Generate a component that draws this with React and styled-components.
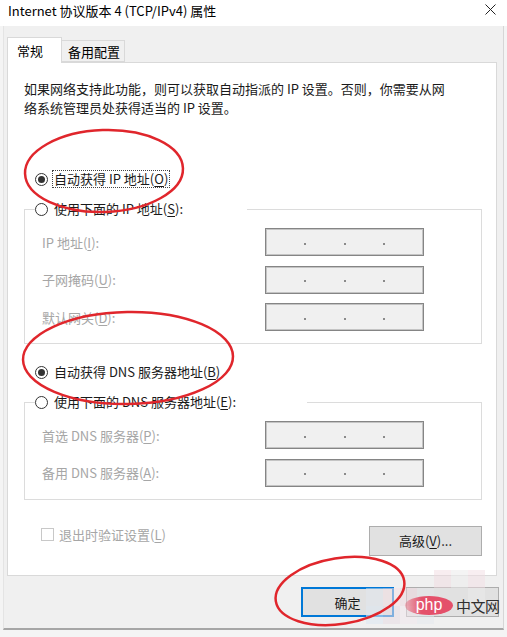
import React from 'react';
import styled, { createGlobalStyle } from 'styled-components';

const GlobalStyle = createGlobalStyle`
  html, body {
    margin: 0;
    padding: 0;
    background: #f4f4f4;
  }
  body {
    font-family: 'Noto Sans CJK SC', 'Noto Sans', sans-serif;
    font-size: 13px;
    color: #1a1a1a;
  }
`;

const Screen = styled.div`
  position: relative;
  width: 507px;
  height: 637px;
  overflow: hidden;
  background: #f4f4f4;
`;

const TitleBar = styled.div`
  height: 26px;
  background: #fff;
  display: flex;
  justify-content: space-between;
  align-items: flex-start;
  padding: 2px 11px 0 8px;
  box-sizing: border-box;
`;

const Title = styled.div`
  font-size: 13px;
  line-height: 18px;
  color: #000;
`;

const CloseBtn = styled.svg`
  margin-top: 2px;
`;

const Window = styled.div`
  margin-left: 3px;
  width: 501px;
  box-sizing: border-box;
  background: #f0f0f0;
  border-left: 1px solid #e4e4e4;
  border-right: 1px solid #d6d6d6;
  border-bottom: 2px solid #a6a6a6;
  padding: 11px 6px 0 3px;
`;

const Tabs = styled.div`
  display: flex;
  align-items: flex-end;
  position: relative;
  z-index: 1;
`;

const Tab = styled.div`
  box-sizing: border-box;
  height: ${(p) => (p.$active ? '26px' : '22px')};
  width: ${(p) => p.$w}px;
  padding-left: ${(p) => (p.$active ? '9px' : '6px')};
  display: flex;
  align-items: center;
  background: ${(p) => (p.$active ? '#fff' : '#f0f0f0')};
  border: 1px solid #d9d9d9;
  border-bottom: ${(p) => (p.$active ? 'none' : '1px solid #d9d9d9')};
  border-left: ${(p) => (p.$active ? '1px solid #d9d9d9' : 'none')};
  margin-bottom: ${(p) => (p.$active ? '-1px' : '0')};
  font-size: 13px;
  color: #000;
`;

const Panel = styled.div`
  box-sizing: border-box;
  height: 514px;
  background: #fff;
  border: 1px solid #d9d9d9;
  padding: 16px 14px 0 16px;
  display: flex;
  flex-direction: column;
`;

const Intro = styled.p`
  margin: 0;
  font-size: 13px;
  line-height: 19px;
  white-space: nowrap;
  color: #1a1a1a;
`;

const RadioRow = styled.div`
  display: flex;
  align-items: center;
  height: 18px;
  margin-left: 11px;
  margin-top: ${(p) => p.$mt || 0}px;
  gap: 5px;
  font-size: 13px;
  color: #1a1a1a;
`;

const RadioDot = styled.span`
  box-sizing: border-box;
  width: 13px;
  height: 13px;
  border-radius: 50%;
  border: 1px solid #333;
  background: #fff;
  display: flex;
  align-items: center;
  justify-content: center;
  flex-shrink: 0;

  &::after {
    content: '';
    width: 7px;
    height: 7px;
    border-radius: 50%;
    background: #333;
    display: ${(p) => (p.$checked ? 'block' : 'none')};
  }
`;

const RadioLabel = styled.span`
  white-space: nowrap;
  line-height: 16px;
  padding: 0 1px;
  outline: ${(p) => (p.$focus ? '1px dotted #444' : 'none')};
`;

const Key = styled.u`
  text-underline-offset: 2px;
`;

const Group = styled.fieldset`
  margin: 12px 0 0 0;
  padding: 0;
  border: 1px solid #dcdcdc;
  min-width: 0;
`;

const Legend = styled.legend`
  padding: 0;
  margin-left: 10px;
  width: ${(p) => p.$w}px;
  height: 18px;
  display: flex;
  align-items: center;
  gap: 5px;
  font-size: 13px;
  color: #1a1a1a;
`;

const Fields = styled.div`
  display: grid;
  grid-template-columns: 223px 159px;
  row-gap: 9.5px;
  align-items: center;
  padding: 10px 0 12px 17px;
`;

const FieldLabel = styled.span`
  font-size: 13px;
  color: #a6a6a6;
  white-space: nowrap;
`;

const IpBox = styled.div`
  box-sizing: border-box;
  height: 28px;
  background: #f0f0f0;
  border: 1px solid #858585;
  box-shadow: inset 0 0 0 1px #c4c4c4;
  display: grid;
  grid-template-columns: 1fr 0 1fr 0 1fr 0 1fr;
  align-items: center;
`;

const IpDot = styled.span`
  width: 2px;
  height: 2px;
  margin-left: -1px;
  margin-top: 3px;
  background: #8a8a8a;
`;

const BottomRow = styled.div`
  display: flex;
  justify-content: space-between;
  align-items: flex-start;
  margin-top: 26px;
  padding-left: 17px;
`;

const CheckRow = styled.div`
  display: flex;
  align-items: center;
  gap: 5px;
  height: 18px;
  font-size: 13px;
  color: #a6a6a6;
`;

const CheckBox = styled.span`
  box-sizing: border-box;
  width: 13px;
  height: 13px;
  border: 1px solid #c8c8c8;
  background: #fff;
`;

const Button = styled.div`
  box-sizing: border-box;
  width: ${(p) => p.$w}px;
  height: 30px;
  display: flex;
  align-items: center;
  justify-content: center;
  background: #e1e1e1;
  border: ${(p) => (p.$primary ? '2px solid #0078d7' : '1px solid #adadad')};
  font-size: 13px;
  color: #1a1a1a;
`;

const Footer = styled.div`
  height: 52px;
  box-sizing: border-box;
  display: flex;
  justify-content: flex-end;
  gap: 12px;
  padding: 11px 0 0 0;
  margin-right: -2px;
`;

const Marks = styled.svg`
  position: absolute;
  left: 0;
  top: 0;
  pointer-events: none;
`;

const Watermark = styled.div`
  position: absolute;
  left: 366px;
  top: 570px;
  width: 136px;
  height: 54px;
  display: grid;
  grid-template-columns: repeat(8, 1fr);
  grid-template-rows: repeat(3, 1fr);
  pointer-events: none;
`;

const Tile = styled.span`
  background: ${(p) => p.$c};
`;

const Brand = styled.div`
  position: absolute;
  left: 405px;
  top: 595px;
  display: flex;
  align-items: center;
  gap: 3px;
  pointer-events: none;
`;

const Php = styled.span`
  width: 48px;
  height: 19px;
  border-radius: 50%;
  background: linear-gradient(90deg, rgba(232, 90, 110, 0.35), #e4506a 35%);
  color: #fff;
  font-family: 'Liberation Sans', sans-serif;
  font-size: 16px;
  line-height: 17px;
  text-align: center;
`;

const Cn = styled.span`
  font-size: 15px;
  color: #2f2f2f;
  letter-spacing: -0.5px;
`;

const tiles = [
  'transparent', 'transparent', 'transparent', 'transparent', 'rgba(240,215,222,0.45)', 'rgba(236,236,236,0.6)', 'rgba(242,222,228,0.5)', 'transparent',
  'rgba(225,232,240,0.5)', 'rgba(245,225,230,0.55)', 'rgba(238,214,222,0.5)', 'rgba(230,230,236,0.45)', 'transparent', 'transparent', 'rgba(236,236,236,0.5)', 'transparent',
  'rgba(222,232,242,0.6)', 'rgba(232,220,228,0.55)', 'rgba(240,230,236,0.5)', 'rgba(228,232,238,0.5)', 'transparent', 'transparent', 'transparent', 'transparent',
];

function IpField() {
  return (
    <IpBox>
      <span />
      <IpDot />
      <span />
      <IpDot />
      <span />
      <IpDot />
      <span />
    </IpBox>
  );
}

export default function App() {
  return (
    <>
      <GlobalStyle />
      <Screen>
        <TitleBar>
          <Title>Internet 协议版本 4 (TCP/IPv4) 属性</Title>
          <CloseBtn width="11" height="11" viewBox="0 0 11 11">
            <path d="M0.5 0.5 L10.5 10.5 M10.5 0.5 L0.5 10.5" stroke="#222" strokeWidth="1" />
          </CloseBtn>
        </TitleBar>

        <Window>
          <Tabs>
            <Tab $active $w={55}>常规</Tab>
            <Tab $w={63}>备用配置</Tab>
          </Tabs>

          <Panel>
            <Intro>
              如果网络支持此功能，则可以获取自动指派的 IP 设置。否则，你需要从网
              <br />
              络系统管理员处获得适当的 IP 设置。
            </Intro>

            <RadioRow $mt={53}>
              <RadioDot $checked />
              <RadioLabel $focus>
                自动获得 IP 地址(<Key>O</Key>)
              </RadioLabel>
            </RadioRow>

            <Group>
              <Legend $w={212}>
                <RadioDot />
                <RadioLabel>
                  使用下面的 IP 地址(<Key>S</Key>):
                </RadioLabel>
              </Legend>
              <Fields>
                <FieldLabel>IP 地址(<Key>I</Key>):</FieldLabel>
                <IpField />
                <FieldLabel>子网掩码(<Key>U</Key>):</FieldLabel>
                <IpField />
                <FieldLabel>默认网关(<Key>D</Key>):</FieldLabel>
                <IpField />
              </Fields>
            </Group>

            <RadioRow $mt={19}>
              <RadioDot $checked />
              <RadioLabel>
                自动获得 DNS 服务器地址(<Key>B</Key>)
              </RadioLabel>
            </RadioRow>

            <Group>
              <Legend $w={272}>
                <RadioDot />
                <RadioLabel>
                  使用下面的 DNS 服务器地址(<Key>E</Key>):
                </RadioLabel>
              </Legend>
              <Fields>
                <FieldLabel>首选 DNS 服务器(<Key>P</Key>):</FieldLabel>
                <IpField />
                <FieldLabel>备用 DNS 服务器(<Key>A</Key>):</FieldLabel>
                <IpField />
              </Fields>
            </Group>

            <BottomRow>
              <CheckRow>
                <CheckBox />
                <span>
                  退出时验证设置(<Key>L</Key>)
                </span>
              </CheckRow>
              <Button $w={113}>
                高级(<Key>V</Key>)...
              </Button>
            </BottomRow>
          </Panel>

          <Footer>
            <Button $primary $w={93}>确定</Button>
            {/* cancel caption sits under the watermark in the screenshot */}
            <Button $w={93} aria-label="取消" />
          </Footer>
        </Window>

        <Watermark>
          {tiles.map((c, i) => (
            <Tile key={i} $c={c} />
          ))}
        </Watermark>
        <Brand>
          <Php>php</Php>
          <Cn>中文网</Cn>
        </Brand>

        {/* red hand-drawn annotation rings */}
        <Marks width="507" height="637" viewBox="0 0 507 637">
          <g fill="none" stroke="#e0262c" strokeWidth="2.5">
            <ellipse cx="104" cy="171" rx="79" ry="41" transform="rotate(-2 104 171)" />
            <ellipse cx="128" cy="358" rx="105" ry="46" transform="rotate(-1 128 358)" />
            <ellipse cx="340" cy="591" rx="65" ry="33" transform="rotate(-9 340 591)" />
          </g>
        </Marks>
      </Screen>
    </>
  );
}
